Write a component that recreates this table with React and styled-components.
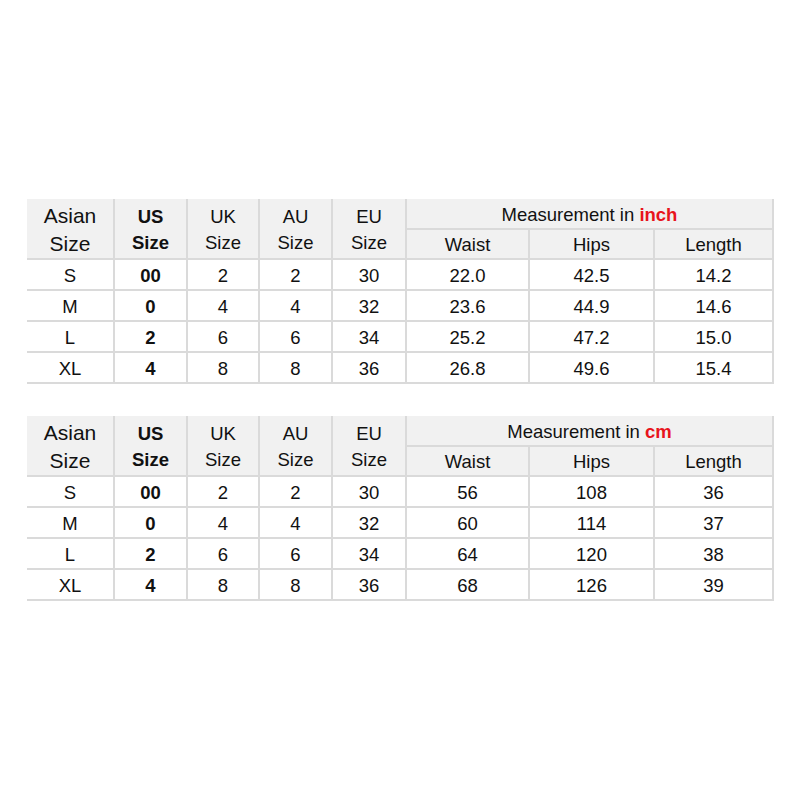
import React from "react";
import styled, { createGlobalStyle } from "styled-components";

const GlobalStyle = createGlobalStyle`
  html, body {
    margin: 0;
    padding: 0;
    background: #fff;
  }
  body {
    font-family: "Liberation Sans", Arial, sans-serif;
    color: #111;
  }
`;

const charts = [
  {
    unit: "inch",
    rows: [
      ["S", "00", "2", "2", "30", "22.0", "42.5", "14.2"],
      ["M", "0", "4", "4", "32", "23.6", "44.9", "14.6"],
      ["L", "2", "6", "6", "34", "25.2", "47.2", "15.0"],
      ["XL", "4", "8", "8", "36", "26.8", "49.6", "15.4"],
    ],
  },
  {
    unit: "cm",
    rows: [
      ["S", "00", "2", "2", "30", "56", "108", "36"],
      ["M", "0", "4", "4", "32", "60", "114", "37"],
      ["L", "2", "6", "6", "34", "64", "120", "38"],
      ["XL", "4", "8", "8", "36", "68", "126", "39"],
    ],
  },
];

const colWidths = [87, 73, 72, 73, 74, 123, 125, 119];

const Page = styled.main`
  width: 800px;
  height: 800px;
  box-sizing: border-box;
  padding: 199px 0 0 27px;
  display: flex;
  flex-direction: column;
  gap: 32px;
`;

const Table = styled.table`
  width: 746px;
  border-collapse: collapse;
  table-layout: fixed;
  font-size: 18.5px;
  color: #111;

  th,
  td {
    border: 2px solid #dadada;
    padding: 0;
    text-align: center;
    vertical-align: middle;
  }
  tr > :first-child {
    border-left: none;
  }
  thead tr:first-child > * {
    border-top: none;
  }
`;

const HeadCell = styled.th`
  background: #f1f1f1;
  font-weight: ${(p) => (p.$bold ? 700 : 400)};
  font-size: ${(p) => (p.$big ? "21px" : "18.5px")};
  line-height: ${(p) => (p.$big ? "28px" : "26px")};
  padding-top: 2px !important;
  height: ${(p) => p.$h || 26}px;
`;

const Unit = styled.span`
  color: #e8141c;
  font-weight: 700;
`;

const Cell = styled.td`
  height: 26px;
  line-height: 26px;
  padding-top: 3px !important;
  font-weight: ${(p) => (p.$bold ? 700 : 400)};
`;

function SizeTable({ unit, rows }) {
  return (
    <Table>
      <colgroup>
        {colWidths.map((w, i) => (
          <col key={i} style={{ width: w }} />
        ))}
      </colgroup>
      <thead>
        <tr>
          <HeadCell rowSpan={2} $big>
            Asian
            <br />
            Size
          </HeadCell>
          <HeadCell rowSpan={2} $bold>
            US
            <br />
            Size
          </HeadCell>
          <HeadCell rowSpan={2}>
            UK
            <br />
            Size
          </HeadCell>
          <HeadCell rowSpan={2}>
            AU
            <br />
            Size
          </HeadCell>
          <HeadCell rowSpan={2}>
            EU
            <br />
            Size
          </HeadCell>
          <HeadCell colSpan={3} $h={27}>
            Measurement in <Unit>{unit}</Unit>
          </HeadCell>
        </tr>
        <tr>
          <HeadCell $h={26}>Waist</HeadCell>
          <HeadCell $h={26}>Hips</HeadCell>
          <HeadCell $h={26}>Length</HeadCell>
        </tr>
      </thead>
      <tbody>
        {rows.map((r) => (
          <tr key={r[0]}>
            {r.map((v, i) => (
              <Cell key={i} $bold={i === 1}>
                {v}
              </Cell>
            ))}
          </tr>
        ))}
      </tbody>
    </Table>
  );
}

export default function App() {
  return (
    <>
      <GlobalStyle />
      <Page>
        {charts.map((c) => (
          <SizeTable key={c.unit} unit={c.unit} rows={c.rows} />
        ))}
      </Page>
    </>
  );
}
